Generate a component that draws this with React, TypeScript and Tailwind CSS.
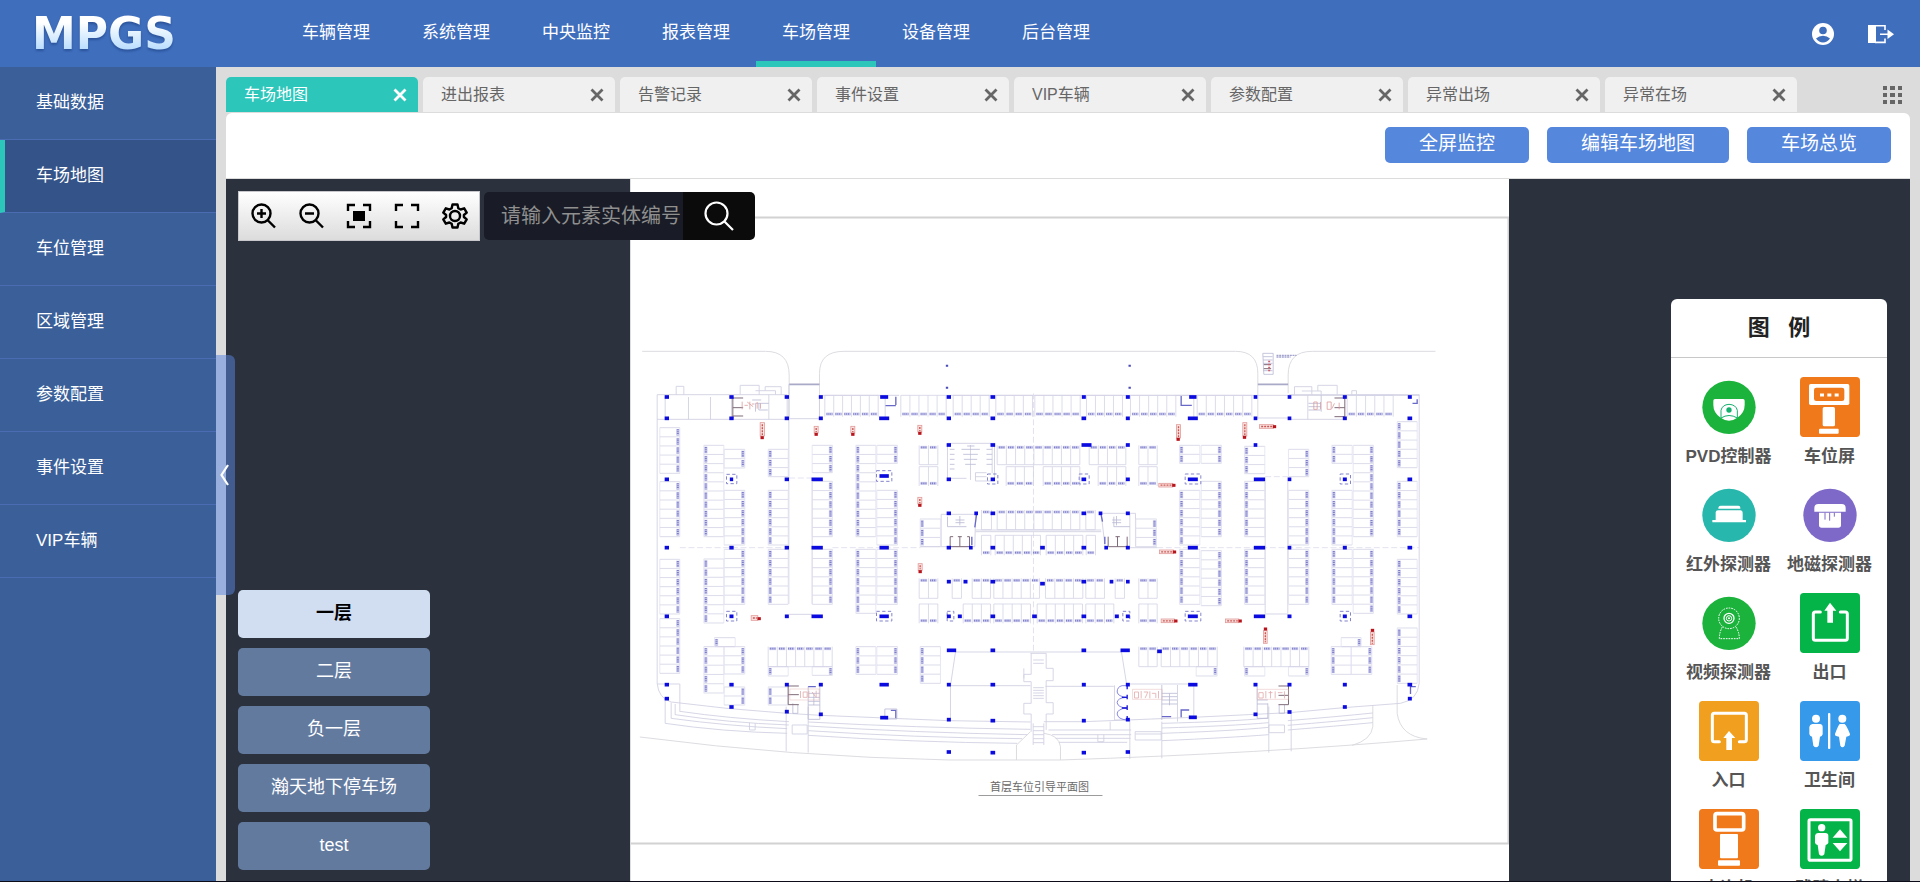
import React from "react";

const topNav = ["车辆管理", "系统管理", "中央监控", "报表管理", "车场管理", "设备管理", "后台管理"];
const sideNav = ["基础数据", "车场地图", "车位管理", "区域管理", "参数配置", "事件设置", "VIP车辆"];
const tabs = ["车场地图", "进出报表", "告警记录", "事件设置", "VIP车辆", "参数配置", "异常出场", "异常在场"];
const floors = ["一层", "二层", "负一层", "瀚天地下停车场", "test"];

/* ---------- floor plan ---------- */

// Vertical stall blocks: x, y, height, stall count, label side, width
type Block = [number, number, number, number, "l" | "r" | "t" | "b", number];

const columns: Block[] = [
  [88, 263, 137, 5, "r", 60], [88, 425, 165, 6, "r", 60], [88, 658, 164, 6, "r", 60], [88, 836, 164, 6, "r", 60],
  [220, 316, 274, 10, "l", 60], [220, 657, 192, 7, "l", 60], [220, 920, 139, 5, "l", 60],
  [281, 328, 56, 2, "r", 62], [281, 451, 164, 6, "r", 62], [281, 628, 165, 6, "r", 62], [281, 920, 82, 3, "r", 62], [281, 1041, 54, 2, "r", 62],
  [252, 893, 27, 1, "l", 62],
  [413, 328, 82, 3, "l", 60], [413, 451, 164, 6, "l", 60], [413, 628, 165, 6, "l", 60], [413, 980, 28, 1, "l", 60], [413, 1041, 54, 2, "l", 60],
  [545, 316, 82, 3, "r", 61], [545, 424, 166, 6, "r", 61], [545, 628, 165, 6, "r", 61], [545, 980, 26, 1, "r", 61],
  [676, 316, 274, 10, "l", 60], [676, 628, 192, 7, "l", 60], [676, 920, 83, 3, "l", 60],
  [739, 316, 54, 2, "r", 62], [739, 451, 164, 6, "r", 62], [739, 628, 165, 6, "r", 62], [739, 920, 83, 3, "r", 62],
  [869, 537, 83, 3, "l", 61], [869, 920, 110, 4, "l", 61],
  [1516, 537, 83, 3, "r", 62],
  [1647, 316, 54, 2, "l", 61], [1647, 451, 164, 6, "l", 61], [1647, 628, 165, 6, "l", 61],
  [1712, 316, 54, 2, "r", 61], [1712, 424, 166, 6, "r", 61], [1712, 632, 165, 6, "r", 61],
  [1842, 319, 82, 3, "l", 61], [1842, 424, 166, 6, "l", 61], [1842, 628, 165, 6, "l", 61], [1842, 980, 28, 1, "l", 61],
  [1974, 328, 82, 3, "r", 61], [1974, 451, 164, 6, "r", 61], [1974, 628, 165, 6, "r", 61], [1974, 980, 28, 1, "r", 61],
  [1697, 980, 28, 1, "r", 63],
  [2104, 316, 54, 2, "l", 61], [2104, 451, 164, 6, "l", 61], [2104, 628, 165, 6, "l", 61], [2102, 920, 83, 3, "l", 60],
  [2168, 316, 274, 10, "r", 61], [2168, 628, 192, 7, "r", 61], [2162, 920, 83, 3, "r", 62], [2132, 893, 27, 1, "r", 60],
  [2300, 245, 138, 5, "l", 60], [2300, 424, 166, 6, "l", 60], [2300, 658, 164, 6, "l", 60], [2300, 864, 166, 6, "l", 60],
];

// Horizontal stall blocks: x, y, width, stall count, label side, height
const rows: Block[] = [
  [583, 166, 160, 6, "b", 64], [811, 166, 136, 5, "b", 64], [968, 166, 108, 4, "b", 64], [1096, 166, 110, 4, "b", 64],
  [1213, 166, 136, 5, "b", 64], [1368, 166, 108, 4, "b", 64], [1500, 166, 136, 5, "b", 64], [1700, 166, 164, 6, "b", 64], [2150, 166, 138, 5, "b", 64],
  [866, 316, 56, 2, "t", 58], [1100, 316, 248, 9, "t", 58], [1376, 316, 110, 4, "t", 58], [1525, 316, 55, 2, "t", 58],
  [866, 380, 56, 2, "b", 58], [1127, 380, 82, 3, "b", 58], [1238, 380, 110, 4, "b", 58], [1403, 380, 83, 3, "b", 58], [1525, 380, 55, 2, "b", 58],
  [1053, 510, 30, 1, "t", 59], [1100, 510, 248, 9, "t", 59], [1366, 510, 28, 1, "t", 59],
  [1053, 586, 28, 1, "b", 60], [1094, 586, 136, 5, "b", 60], [1247, 586, 110, 4, "b", 60], [1367, 586, 28, 1, "b", 60],
  [866, 715, 56, 2, "t", 60], [965, 715, 28, 1, "t", 60], [1025, 715, 55, 2, "t", 60], [1090, 715, 137, 5, "t", 60],
  [1245, 715, 112, 4, "t", 60], [1366, 715, 56, 2, "t", 60], [1454, 715, 28, 1, "t", 60], [1525, 715, 55, 2, "t", 60],
  [866, 792, 56, 2, "b", 58], [998, 792, 82, 3, "b", 58], [1090, 792, 110, 4, "b", 58], [1220, 792, 136, 5, "b", 58], [1366, 792, 84, 3, "b", 58], [1525, 792, 55, 2, "b", 58],
  [413, 920, 192, 7, "t", 60], [1525, 920, 55, 2, "t", 60], [1592, 920, 168, 6, "t", 60], [1840, 920, 195, 7, "t", 60],
];

// Structural pillars: centre x, centre y, width
const pillars: [number, number, number][] = [
  [109, 171, 13], [303, 171, 13], [469, 171, 13], [571, 171, 12], [761, 171, 24], [955, 171, 13], [1087, 171, 14],
  [109, 235, 13], [303, 235, 13], [469, 235, 13], [571, 235, 12], [761, 235, 30], [955, 235, 13], [1087, 235, 14],
  [109, 418, 13], [303, 418, 10], [469, 418, 13], [560, 418, 34], [761, 408, 28], [955, 315, 13], [1087, 315, 14], [955, 418, 13], [1087, 418, 13],
  [955, 520, 13], [1037, 520, 11], [1087, 520, 14], [955, 623, 13], [1021, 623, 11], [1087, 623, 14],
  [109, 623, 13], [303, 623, 13], [469, 623, 13], [560, 623, 34], [761, 623, 28],
  [1360, 171, 12], [1492, 171, 12], [1687, 171, 22], [1875, 171, 11], [1977, 171, 11], [2143, 171, 12], [2338, 171, 12],
  [1360, 235, 14], [1492, 235, 12], [1687, 235, 30], [1875, 235, 11], [1977, 235, 11], [2143, 235, 12], [2338, 235, 14],
  [1368, 315, 30], [1492, 315, 12], [1875, 315, 11], [1360, 418, 14], [1492, 418, 12], [1687, 418, 30], [1887, 418, 34], [1977, 418, 11], [2143, 418, 12], [2338, 418, 14],
  [1360, 520, 14], [1410, 520, 11], [1492, 520, 12], [1236, 623, 14], [1360, 623, 14], [1427, 623, 11], [1492, 623, 12], [1687, 623, 30], [1887, 623, 34], [1977, 623, 11], [2143, 623, 12], [2338, 623, 14],
  [955, 725, 12], [1005, 725, 12], [1087, 725, 14], [1236, 731, 14], [1360, 725, 14], [1443, 725, 11], [1492, 725, 11],
  [109, 829, 13], [303, 829, 12], [469, 829, 12], [560, 829, 34], [761, 829, 28], [955, 829, 12], [988, 829, 12], [1087, 829, 14],
  [1212, 829, 14], [1360, 829, 14], [1459, 829, 12], [1492, 829, 12], [1687, 829, 30], [1887, 829, 34], [1977, 829, 12], [2143, 829, 12], [2338, 829, 14],
  [963, 931, 28], [1087, 931, 14], [1360, 931, 14], [1484, 931, 28], [1587, 934, 14],
  [109, 1034, 13], [303, 1034, 13], [469, 1034, 12], [571, 1034, 12], [761, 1034, 28], [955, 1034, 12], [1087, 1034, 14],
  [1360, 1034, 12], [1492, 1034, 12], [1687, 1034, 28], [1875, 1034, 12], [1977, 1034, 12], [2143, 1034, 12], [2338, 1034, 14],
  [109, 1076, 13], [303, 1101, 13], [469, 1115, 12], [571, 1123, 12], [761, 1133, 24], [955, 1139, 12], [1087, 1142, 14],
  [1360, 1142, 12], [1492, 1139, 12], [1687, 1132, 24], [1875, 1123, 12], [1977, 1116, 12], [2143, 1101, 12], [2338, 1076, 12],
  [955, 1236, 13], [1087, 1238, 14], [1360, 1238, 13], [1492, 1236, 13],
];

// Guide signs: x, y, width, height, dot x, dot y
const signs: [number, number, number, number, number, number][] = [
  [389, 248, 13, 40, 395, 293], [551, 259, 12, 20, 557, 283], [661, 259, 12, 20, 667, 283], [862, 256, 12, 20, 868, 280],
  [862, 472, 12, 20, 868, 496], [863, 671, 12, 20, 869, 695], [362, 827, 20, 14, 386, 836],
  [1638, 254, 12, 40, 1643, 298], [1837, 248, 12, 40, 1842, 292], [1887, 254, 42, 11, 1932, 260],
  [1585, 430, 42, 11, 1630, 436], [1587, 630, 42, 11, 1632, 636], [1592, 837, 40, 11, 1636, 843], [1785, 837, 40, 11, 1829, 843],
  [1899, 872, 11, 38, 1905, 867], [2220, 876, 11, 38, 2226, 871],
];

function StallColumn({ block }: { block: Block }) {
  const [x, y, h, n, side, w] = block;
  const step = h / n;
  const lx = side === "l" ? x + 6 : x + w - 6;
  return (
    <g>
      {Array.from({ length: n + 1 }, (_, i) => (
        <path key={i} d={`M${x} ${y + i * step}h${w}`} stroke="#d3d3e6" strokeWidth="2.4" />
      ))}
      <path d={side === "l" ? `M${x + w} ${y}v${h}M${x} ${y}v${h}` : `M${x} ${y}v${h}M${x + w} ${y}v${h}`} stroke="#e2e2f3" strokeWidth="2.4" />
      {Array.from({ length: n }, (_, i) => (
        <g key={i}>
          <path d={`M${lx} ${y + i * step + 4}v20`} stroke="#cdcdee" strokeWidth="10" />
          <path d={`M${lx} ${y + i * step + 5}v18`} stroke="#7c7cc9" strokeWidth="6" strokeDasharray="3 2.6" />
        </g>
      ))}
    </g>
  );
}

function StallRow({ block }: { block: Block }) {
  const [x, y, w, n, side, h] = block;
  const step = w / n;
  const ly = side === "t" ? y + 6 : y + h - 8;
  return (
    <g>
      {Array.from({ length: n + 1 }, (_, i) => (
        <path key={i} d={`M${x + i * step} ${y}v${h}`} stroke="#d3d3e6" strokeWidth="2.4" />
      ))}
      <path d={side === "t" ? `M${x} ${y + h}h${w}` : `M${x} ${y}h${w}`} stroke="#d3d3e6" strokeWidth="2.4" />
      {Array.from({ length: n }, (_, i) => (
        <g key={i}>
          <path d={`M${x + i * step + 4} ${ly}h20`} stroke="#cdcdee" strokeWidth="9" />
          <path d={`M${x + i * step + 5} ${ly}h18`} stroke="#7c7cc9" strokeWidth="5" strokeDasharray="3 2.6" />
        </g>
      ))}
    </g>
  );
}

function FloorPlan() {
  return (
    <svg className="block w-full shrink-0" viewBox="629.5 179 879 703" fill="none" role="img" aria-label="首层车位引导平面图">
      <path d="M630 217.500H1508V843.500H630" stroke="#d2d2d2" strokeWidth="2" />
      <path d="M630 179V882" stroke="#dedede" />
      <g transform="translate(630 340) scale(0.33333)">
        {/* road edges */}
        <g stroke="#d6d6dc" strokeWidth="2.600">
          <path d="M35 34H405Q476 34 476 105V236" />
          <path d="M567 236V100Q567 34 640 34H1815Q1882 34 1882 100V236" />
          <path d="M1973 160V105Q1973 34 2045 34H2415" />
          <path d="M28 1191Q480 1250 955 1260H1290Q1900 1240 2390 1197" />
          <path d="M1158 1260V1215L1200 1175M1290 1260V1220Q1285 1185 1240 1180" />
          <path d="M2300 1035V1120Q2310 1190 2390 1197M2227 1095V1160Q2222 1200 2165 1216" />
        </g>
        <path d="M476 133H567M1882 133H1973" stroke="#a9a9c8" strokeWidth="5" />
        {/* building outline */}
        <g stroke="#d0d0e2" strokeWidth="2.600">
          <path d="M80 1030V164H470V238H80M2366 164V1030M1976 164H2366" />
          <path d="M104 171V238M174 171V238M240 171V238M303 171V238M415 164V238M476 236H571" />
          <path d="M567 166H806M567 166V236M764 166V232M947 166H2366M1636 166H1690M1690 166V232M1976 238H2140M1882 234H1976M2032 166V238" />
          <path d="M137 164V139H160V164M329 164V136H386V164M375 152H435V164M404 152V140H452V164M1992 164V140H2044V164M2014 153H2072V164M2062 153V136H2120V164M2164 164V152H2178V164" />
          <path d="M80 1030Q84 1075 122 1086Q290 1108 470 1120L571 1126L955 1142L1200 1146M2366 1030Q2362 1080 2310 1090L2140 1103L1977 1118L1687 1132L1492 1140L1360 1145H1240" />
          <path d="M80 1032H148V1115M104 1076V1150M122 1088V1135M134 1092V1125" />
          <path d="M104 1150Q270 1175 470 1180M122 1135Q290 1158 470 1166M134 1124Q290 1148 475 1155M148 1114Q290 1135 475 1145" />
          <path d="M533 1146Q850 1163 1200 1168M533 1158Q850 1178 1190 1184M533 1172Q850 1193 1175 1196M533 1186Q850 1207 1160 1210" />
          <path d="M1594 1150Q1800 1145 1915 1134M1594 1164Q1800 1158 1915 1148M1594 1180Q1800 1173 1915 1162M1594 1202Q1800 1193 1915 1184M1972 1142Q2120 1130 2227 1119M1972 1156Q2120 1144 2227 1133M1972 1170Q2120 1158 2227 1148" />
          <path d="M467 1100V1234M533 1100V1238M1594 1145V1255M1915 1100V1238M1982 1110V1234M485 1155H530V1182H485ZM357 1148V1170H374V1150M1514 1175H1592V1200H1514ZM1515 1182H1592M1915 1155H1962V1178H1915Z" />
          <path d="M1254 1170H1502M1265 1184H1502M1275 1195H1500M1285 1207H1490M1498 1140V1257M1439 1145V1170M1402 1184V1205H1420V1184" />
          <path d="M475 133V792M773 623H775M545 424V792M1904 424V820M1972 424V820M1903 822H1972M476 823H545" />
          <path d="M975 936H1473M975 936L960 1037V1140M1473 936L1489 1037M960 1037H1200M1245 1039H1450M1492 1032H1690V1130M1641 1035V1145M1452 1036V1140H1492" />
          <path d="M932 523H1035L1033 620H870M932 523V620M1035 575H1412M1035 570H1412M1412 520H1515V620M1498 520V620M1492 623H1580M1412 520L1424 623" />
          <path d="M951 310H1092V423H1035V398H1068M951 310V415H1008M1020 315V420M1035 410H1068M1085 310V400" />
          <path d="M1202 940V1003H1180V1015M1180 985V1025H1202V1090H1180V1122H1202V1175M1247 940V985H1268V1022H1247V1088H1268V1122H1247V1170M1200 940H1247" />
          <path d="M1208 960H1240M1208 970H1240M1208 1043H1240M1208 1051H1240M1208 1059H1240M1208 1067H1240M1208 1075H1240M1208 1150V1215M1240 1150V1215M1208 1160H1240M1208 1172H1240M1208 1184H1240M1208 1196H1240M1208 1208H1240" />
        </g>
        <path d="M1209 160V935M476 414H545M606 623H870M148 623H460M1904 410H1972M1580 623H2366" stroke="#dcdcec" strokeWidth="2.400" strokeDasharray="18 8" />
        {columns.map((b, i) => <StallColumn key={i} block={b} />)}
        {rows.map((b, i) => <StallRow key={i} block={b} />)}
        {/* stairs and lobbies */}
        <g stroke="#b7b7d4" strokeWidth="2.400">
          <path d="M958 328H972M958 343H972M958 358H972M958 373H972M958 387H972M1068 328H1085M1068 343H1085M1068 358H1085M1068 373H1085M993 328H1048M998 343H1042M1000 358H1040M1004 373H1036M1010 318H1032M951 530V560H1008M975 540H1002M975 548H1002M988 528V556M1450 530V560H1498M1445 540H1472M1445 548H1472M1458 528V556" />
          <path d="M533 1060H568M533 1072H568M533 1084H568M533 1095H568M550 1060V1095M533 1040V1138H568V1040M487 1090V1120H502V1095M1594 1035V1140M1594 1060H1640M1594 1070H1640M1594 1080H1640M1594 1092H1640M1617 1060V1096M1880 1040V1135H1912V1090M1880 1080H1912M1880 1092H1912M1946 1095V1120H1962V1095" />
          <path d="M415 190H375V215M365 180H392M385 190V210H412M2034 190H2070M2034 200H2070M2034 210H2070M2072 166V215" />
          <path d="M1897 40H1928V103H1900ZM1898 50H1926M1898 60H1926M1898 70H1926M1898 92H1926" />
        </g>
        <path d="M1938 46H1998M1938 51H1980" stroke="#a3a3cf" strokeWidth="4" strokeDasharray="6 2" />
        {/* stair walls */}
        <g stroke="#7d6a78" strokeWidth="3">
          <path d="M307 171V235M307 203H338M307 174H338M307 228H338M2143 171V235M2143 203H2112M2143 174H2112M2143 230H2112" />
          <path d="M473 1038V1094H505M473 1064H505M473 1038H505M1974 1038V1094H1944M1974 1066H1944M1974 1038H1944" />
          <path d="M959 590V620H1017V590M988 590V620M959 590H968M982 590H994M1010 590H1017M1433 590V620H1490V590M1461 590V620M1455 590H1468" />
          <path d="M1900 74H1922M1900 86H1922" />
        </g>
        {/* hall names */}
        <g stroke="#e2a9a9" strokeWidth="2.400">
          <path d="M478 1047H566V1080H478ZM1506 1048H1595V1078H1506ZM1880 1048H1974V1078H1880Z" strokeOpacity="0.500" />
          <path d="M510 1053V1074M518 1056H530V1072H518ZM535 1052V1074M545 1056L555 1070M557 1052V1074M1512 1056H1524V1074H1512ZM1532 1053V1075M1540 1056H1552L1544 1074M1558 1054V1075M1564 1060H1576V1074M1584 1053V1075M1885 1058H1898V1074H1885ZM1906 1053V1075M1914 1058H1926M1920 1053V1075M1934 1054V1075M1942 1058H1956M1962 1054V1075" />
          <path d="M335 185V208M342 196H352M358 185V208M364 192H372M380 186V206M390 190V206M350 186L368 200M2050 186H2060V208H2050ZM2070 186V208M2090 186H2102V208H2090ZM2112 190L2104 206M2126 188V208" stroke="#dc9c9c" />
        </g>
        <path d="M1916 62V98" stroke="#d06070" strokeWidth="6" strokeDasharray="5 4" />
        {/* corner shafts */}
        <path d="M796 170V195M765 197H796M1652 168V196H1684M781 1111H796V1135M1652 1132V1110H1676M1038 525L1033 562M1024 590V615M1412 525L1416 545M1423 590V612M2346 190H2360V178M2340 1062V1040H2356M533 1040H556M1594 1130H1622" stroke="#6868c8" strokeWidth="4" />
        <path d="M763 1107H799V1137H763Z" stroke="#b8b8d8" strokeWidth="2.400" />
        {/* round shafts */}
        <g stroke="#5858d8" strokeWidth="3">
          <path d="M1488 1037H1475Q1460 1040 1460 1056Q1462 1070 1490 1072M1488 1072Q1460 1074 1460 1088Q1462 1103 1490 1104M1488 1104Q1460 1107 1460 1122Q1462 1138 1490 1140" strokeOpacity="0.700" />
          <path d="M1490 1037V1048M1490 1064V1078M1490 1096V1110M1490 1128V1140M1474 1072H1490M1474 1104H1490" stroke="#1818d8" strokeWidth="4" />
        </g>
        {/* column guards */}
        <g stroke="#8484cc" strokeWidth="3" strokeDasharray="10 7">
          <path d="M288 403H319V431H288ZM738 392H784V424H738ZM1071 402H1102V432H1071ZM1346 402H1376V432H1346ZM1664 402H1711V432H1664ZM2129 402H2160V432H2129Z" />
          <path d="M288 814H319V843H288ZM738 814H784V843H738ZM950 814H970V843H950ZM1477 814H1498V843H1477ZM1664 814H1711V843H1664ZM2129 814H2160V843H2129Z" />
        </g>
        {pillars.map(([x, y, w], i) => (
          <rect key={i} x={x - w / 2} y={y - 5.5} width={w} height="11" fill="#0b0bdf" />
        ))}
        <path d="M946 77H953M946 143H953M1494 77H1501M1494 143H1501" stroke="#4a4ab8" strokeWidth="6" />
        {signs.map(([x, y, w, h, dx, dy], i) => (
          <g key={i}>
            <rect x={x} y={y} width={w} height={h} fill="#fbe4e2" stroke="#e09a98" strokeWidth="2.4" />
            <path
              d={h > w ? `M${x + w / 2} ${y + 5}V${y + h - 3}` : `M${x + 5} ${y + h / 2}H${x + w - 3}`}
              stroke="#cc5550"
              strokeWidth="4"
              strokeDasharray="6 3"
            />
            <rect x={dx - 5} y={dy - 4.5} width="10" height="9" fill="#b8141c" />
          </g>
        ))}
      </g>
      <text x="1039" y="791" textAnchor="middle" fontSize="11" fill="#6a6a6a">首层车位引导平面图</text>
      <path d="M978 795.500H1102" stroke="#9c9c9c" />
    </svg>
  );
}

/* ---------- legend ---------- */

function Disc({ color, children }: { color: string; children: React.ReactNode }) {
  return (
    <svg viewBox="0 0 180 180" className="size-[60px]" aria-hidden="true">
      <circle cx="90" cy="91" r="80" fill={color} />
      {children}
    </svg>
  );
}

function Tile({ color, children }: { color: string; children: React.ReactNode }) {
  return (
    <svg viewBox="0 0 180 180" className="size-[60px]" aria-hidden="true">
      <rect width="180" height="180" rx="11" fill={color} />
      {children}
    </svg>
  );
}

const legend: { label: string; icon: React.ReactNode }[] = [
  {
    label: "PVD控制器",
    icon: (
      <Disc color="#1bb33c">
        <path d="M43 71Q43 66 48 66H132Q137 66 137 71V84Q137 108 115 122Q90 140 65 122Q43 108 43 84Z" fill="#fff" />
        <path d="M66 124V100Q70 83 90 82Q111 83 115 100V124M66 123Q90 108 115 123" fill="none" stroke="#14b06e" strokeWidth="3" />
        <circle cx="90" cy="99" r="8" fill="#14b06e" />
      </Disc>
    ),
  },
  {
    label: "车位屏",
    icon: (
      <Tile color="#f07a1b">
        <rect x="27" y="21" width="121" height="63" rx="5" fill="#fff" />
        <rect x="42" y="32" width="91" height="40" rx="7" fill="#f07a1b" />
        <path d="M60 54H72M82 54H94M104 54H116" stroke="#fff" strokeWidth="9" />
        <rect x="68" y="90" width="37" height="58" rx="5" fill="#fff" />
        <rect x="57" y="155" width="59" height="15" rx="3" fill="#fff" />
      </Tile>
    ),
  },
  {
    label: "红外探测器",
    icon: (
      <Disc color="#27b7ac">
        <path d="M58 71V68Q59 62 65 62H118Q124 62 124 68V71ZM50 82Q51 76 57 76H125Q131 77 131 83V105H141V112H40V105H50Z" fill="#fff" />
      </Disc>
    ),
  },
  {
    label: "地磁探测器",
    icon: (
      <Disc color="#7e69c8">
        <path d="M43 80V69Q43 57 55 57H125Q137 57 137 69V80ZM57 83H123V121Q123 128 115 128H65Q57 128 57 121Z" fill="#fff" />
        <path d="M75 83V104M89 83V107M103 83V95" stroke="#7e69c8" strokeWidth="3" />
      </Disc>
    ),
  },
  {
    label: "视频探测器",
    icon: (
      <Disc color="#1bb33c">
        <g fill="none" stroke="#fff" strokeWidth="3">
          <circle cx="90" cy="76" r="31" strokeDasharray="5 3" />
          <circle cx="90" cy="76" r="15" strokeWidth="4" />
          <circle cx="90" cy="76" r="8" />
          <path d="M70 102Q61 118 61 137H121Q121 118 111 102" strokeDasharray="5 3" />
        </g>
        <circle cx="90" cy="76" r="3" fill="#fff" />
      </Disc>
    ),
  },
  {
    label: "出口",
    icon: (
      <Tile color="#04b448">
        <path d="M61 57H46Q40 57 40 63V136Q40 142 46 142H136Q142 142 142 136V63Q142 57 136 57H121" fill="none" stroke="#fff" strokeWidth="9" strokeLinecap="round" />
        <path d="M90 29L109 53H99V89H82V53H73Z" fill="#fff" />
      </Tile>
    ),
  },
  {
    label: "入口",
    icon: (
      <Tile color="#f0a01e">
        <path d="M61 122H46Q40 122 40 116V43Q40 37 46 37H136Q142 37 142 43V116Q142 122 136 122H121" fill="none" stroke="#fff" strokeWidth="9" strokeLinecap="round" />
        <path d="M90 90L109 111H99V147H82V111H73Z" fill="#fff" />
      </Tile>
    ),
  },
  {
    label: "卫生间",
    icon: (
      <Tile color="#3799ea">
        <circle cx="48" cy="53" r="12" fill="#fff" />
        <circle cx="127" cy="53" r="12" fill="#fff" />
        <path d="M37 69H60Q68 70 68 78V100Q66 107 60 107L56 134Q48 144 40 134L36 107Q29 106 28 99V78Q29 70 37 69Z" fill="#fff" />
        <path d="M119 69H134Q140 74 150 99Q151 105 139 107L134 134Q127 143 121 134L117 107Q103 105 105 99Q114 74 119 69Z" fill="#fff" />
        <rect x="84" y="36" width="7" height="108" rx="3" fill="#fff" />
      </Tile>
    ),
  },
  {
    label: "查询机",
    icon: (
      <Tile color="#f07a1b">
        <rect x="48" y="14" width="86" height="49" rx="6" fill="none" stroke="#fff" strokeWidth="11" />
        <rect x="63" y="75" width="54" height="73" rx="3" fill="#fff" />
        <rect x="57" y="154" width="66" height="16" rx="3" fill="#fff" />
      </Tile>
    ),
  },
  {
    label: "残障电梯",
    icon: (
      <Tile color="#04b448">
        <rect x="27" y="32" width="126" height="122" rx="4" fill="none" stroke="#fff" strokeWidth="9" />
        <circle cx="65" cy="56" r="11" fill="#fff" />
        <path d="M54 72H76Q85 73 85 80V102Q82 107 77 108L73 136Q65 145 57 136L53 108Q46 107 45 101V80Q46 73 54 72ZM120 61L142 86H98ZM98 102H142L120 127Z" fill="#fff" />
      </Tile>
    ),
  },
];

function Cross() {
  return (
    <svg viewBox="0 0 14 14" className="size-[14px]" fill="none" stroke="currentColor" strokeWidth="2.800" aria-hidden="true">
      <path d="M1.500 1.500L12.500 12.500M12.500 1.500L1.500 12.500" />
    </svg>
  );
}

const tools: { name: string; icon: React.ReactNode }[] = [
  { name: "放大", icon: <><circle cx="11.500" cy="10.500" r="9" /><path d="M17.500 17L25 24.500M11.500 6V15M7 10.500H16" /></> },
  { name: "缩小", icon: <><circle cx="11.500" cy="10.500" r="9" /><path d="M17.500 17L25 24.500M7 10.500H16" /></> },
  { name: "适应窗口", icon: <><path d="M2 8V2H9M17 2H24V8M24 18V24H17M9 24H2V18" /><rect x="7" y="8" width="12" height="10" fill="#000" stroke="none" /></> },
  { name: "全屏", icon: <path d="M2 8V2H9M17 2H24V8M24 18V24H17M9 24H2V18" /> },
  {
    name: "设置",
    icon: (
      <>
        <path d="M10.500 1.500H15.500L16.300 5.200L18.600 6.500L22.200 5.300L24.700 9.600L21.900 12V14L24.700 16.400L22.200 20.700L18.600 19.500L16.300 20.800L15.500 24.500H10.500L9.700 20.800L7.400 19.500L3.800 20.700L1.300 16.400L4.100 14V12L1.300 9.600L3.800 5.300L7.400 6.500L9.700 5.200Z" strokeLinejoin="round" />
        <circle cx="13" cy="13" r="5" />
      </>
    ),
  },
];

export default function App() {
  return (
    <div className="flex h-screen flex-col overflow-hidden border-b border-[#0b0c18] bg-[#dcdcdc] font-['Liberation_Sans','Noto_Sans_CJK_SC',sans-serif] text-[17px] leading-6">
      <header className="flex h-[67px] shrink-0 items-stretch bg-[#3f6ebd] pr-[26px] text-white">
        <a href="#home" className="flex w-[276px] items-center pl-8">
          <span className="bg-gradient-to-b from-white from-30% to-[#b5dbff] to-80% bg-clip-text font-['DejaVu_Sans',sans-serif] text-[44px] leading-[58px] font-bold text-transparent drop-shadow-[0_2px_1px_rgba(20,50,110,0.45)]">
            MPGS
          </span>
        </a>
        <nav className="flex">
          {topNav.map((item) => (
            <a
              key={item}
              href="#nav"
              className={
                item === "车场管理"
                  ? "flex w-[120px] items-center justify-center border-y-[6px] border-t-transparent border-b-[#2cc6bb] pb-px"
                  : "flex w-[120px] items-center justify-center pb-px"
              }
            >
              {item}
            </a>
          ))}
        </nav>
        <div className="ml-auto flex items-center gap-[34px]">
          <button type="button" aria-label="用户">
            <svg viewBox="0 0 22 22" className="size-[22px]" aria-hidden="true">
              <circle cx="11" cy="11" r="11" fill="#fff" />
              <circle cx="11" cy="7.500" r="3.800" fill="#3f6ebd" />
              <path d="M4 15.500Q7 12.800 11 12.800T18 15.500Q15 19.400 11 19.400T4 15.500Z" fill="#3f6ebd" />
            </svg>
          </button>
          <button type="button" aria-label="退出">
            <svg viewBox="0 0 26 20" className="h-5 w-[26px]" aria-hidden="true">
              <path d="M0 1H8V19H0Z" fill="#fff" />
              <path d="M7 1.700H17V6M17 14.500V18.400H7M12 10.200H21" fill="none" stroke="#fff" strokeWidth="1.600" />
              <path d="M19.500 5.500L26 10.200L19.500 15Z" fill="#fff" />
            </svg>
          </button>
        </div>
      </header>

      <div className="flex min-h-0 flex-1">
        <aside className="relative w-[216px] shrink-0 bg-[#3a5f99] text-white">
          <nav>
            {sideNav.map((item) => (
              <a
                key={item}
                href="#side"
                className={
                  item === "车场地图"
                    ? "flex h-[73px] items-center border-b border-l-[5px] border-b-[#4b6cb2] border-l-[#2cc6bb] bg-[#345389] pl-[31px]"
                    : "flex h-[73px] items-center border-b border-b-[#4b6cb2] pl-9"
                }
              >
                {item}
              </a>
            ))}
          </nav>
          <button
            type="button"
            aria-label="收起菜单"
            className="absolute top-[288px] left-full z-10 flex h-[240px] w-[19px] items-center justify-center rounded-r-md bg-[rgba(88,134,224,0.51)]"
          >
            <svg viewBox="0 0 9 22" className="mr-0.5 h-[22px] w-[9px]" fill="none" stroke="#fff" strokeWidth="2.200" aria-hidden="true">
              <path d="M8 1L1.500 11L8 21" />
            </svg>
          </button>
        </aside>

        <main className="flex min-w-0 flex-1 flex-col px-[10px] pt-[10px]">
          <div className="mb-px flex h-[35px] shrink-0 gap-[5px]">
            {tabs.map((tab, i) => (
              <div
                key={tab}
                className={
                  i === 0
                    ? "flex w-48 items-center justify-between rounded-t-[5px] bg-[#2cc6bb] pr-[11px] pl-[18px] text-base text-white"
                    : "flex w-48 items-center justify-between rounded-t-[5px] bg-[#f0f0f0] pr-[11px] pl-[18px] text-base text-[#666]"
                }
              >
                <a href="#tab">{tab}</a>
                <button type="button" aria-label={"关闭" + tab}>
                  <Cross />
                </button>
              </div>
            ))}
            <button type="button" aria-label="更多" className="mr-2 ml-auto">
              <svg viewBox="0 0 19 18" className="h-[18px] w-[19px]" fill="#666" aria-hidden="true">
                <path d="M0 0h4v4H0zM7 0h5v4H7zM15 0h4v4h-4zM0 7h4v4H0zM7 7h5v4H7zM15 7h4v4h-4zM0 14h4v4H0zM7 14h5v4H7zM15 14h4v4h-4z" />
              </svg>
            </button>
          </div>

          <section className="flex min-h-0 flex-1 flex-col">
            <div className="flex h-[66px] shrink-0 items-start justify-end gap-[18px] rounded-t-md border-b border-[#dcdcdc] bg-white pt-[14px] pr-[19px] text-[19px] text-white">
              <button type="button" className="h-9 w-36 rounded-[5px] bg-[#5587dd] pb-0.5">全屏监控</button>
              <button type="button" className="h-9 w-[182px] rounded-[5px] bg-[#5587dd] pb-0.5">编辑车场地图</button>
              <button type="button" className="h-9 w-36 rounded-[5px] bg-[#5587dd] pb-0.5">车场总览</button>
            </div>

            <div className="relative min-h-0 flex-1 overflow-hidden bg-[#2b313d] pl-0.5">
              <div className="mx-auto h-full w-[879px] overflow-hidden bg-white">
                <FloorPlan />
              </div>

              <div className="absolute top-3 left-3 flex items-center gap-1">
                <div className="flex h-[50px] border border-[#c8c8cc] bg-gradient-to-b from-white to-[#dcdcdc]">
                  {tools.map((tool) => (
                    <button key={tool.name} type="button" aria-label={tool.name} className="flex w-12 items-center justify-center">
                      <svg viewBox="0 0 26 26" className="size-[26px]" fill="none" stroke="#000" strokeWidth="2.400" aria-hidden="true">
                        {tool.icon}
                      </svg>
                    </button>
                  ))}
                </div>
                <form className="flex h-12 overflow-hidden rounded-[5px]" onSubmit={(e) => e.preventDefault()}>
                  <input
                    type="text"
                    aria-label="元素实体编号"
                    placeholder="请输入元素实体编号"
                    className="w-[199px] bg-[#191c26] pl-[17px] text-xl text-white outline-none placeholder:text-[#8f8f8f]"
                  />
                  <button type="submit" aria-label="搜索" className="flex w-[72px] items-center justify-center bg-[#0b0b0b]">
                    <svg viewBox="0 0 30 30" className="size-[30px]" fill="none" stroke="#fff" strokeWidth="2.200" aria-hidden="true">
                      <circle cx="12.500" cy="12.500" r="11" />
                      <path d="M20.500 20.500L29 29" />
                    </svg>
                  </button>
                </form>
              </div>

              <div className="absolute bottom-[11px] left-3 flex w-48 flex-col gap-[10px] text-lg">
                {floors.map((floor, i) => (
                  <button
                    key={floor}
                    type="button"
                    className={
                      i === 0
                        ? "h-12 rounded-[5px] bg-[#d1def2] pb-0.5 font-bold text-black"
                        : "h-12 rounded-[5px] bg-[#637a9f] pb-0.5 text-white"
                    }
                  >
                    {floor}
                  </button>
                ))}
              </div>

              <section className="absolute top-[120px] right-[23px] w-[216px] rounded-md bg-white">
                <h2 className="h-[59px] border-b border-[#c8c8c8] text-center text-[22px] leading-[58px] font-bold whitespace-pre text-[#222]">图   例</h2>
                <ul className="grid grid-cols-2 px-[7px] pt-[19px]">
                  {legend.map(({ label, icon }) => (
                    <li key={label} className="flex h-[108px] flex-col items-center gap-2">
                      {icon}
                      <span className="font-bold whitespace-nowrap text-[#555]">{label}</span>
                    </li>
                  ))}
                </ul>
              </section>
            </div>
          </section>
        </main>
      </div>
    </div>
  );
}
